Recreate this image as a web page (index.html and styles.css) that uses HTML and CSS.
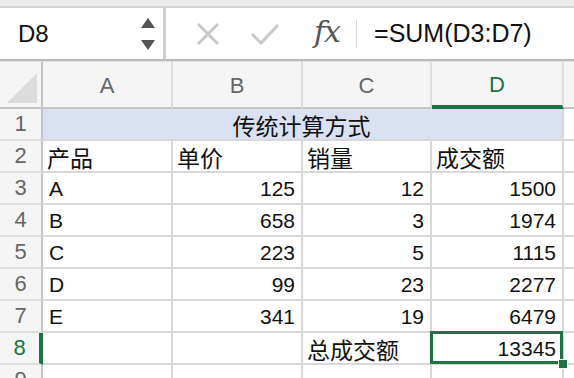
FILE: index.html
```html
<!DOCTYPE html>
<html lang="zh-CN">
<head>
    <meta charset="UTF-8">
    <title>传统计算方式</title>
    <link rel="stylesheet" href="styles.css">
</head>
<body>

    <div class="top-strip"></div>

    <div class="formula-bar">
        <div class="name-box">
            <span class="cell-ref">D8</span>
            <div class="spinner">
                <svg width="14" height="10" viewBox="0 0 14 10"><polygon points="7,0 14,10 0,10" fill="#555"/></svg>
                <svg width="14" height="10" viewBox="0 0 14 10"><polygon points="0,0 14,0 7,10" fill="#555"/></svg>
            </div>
        </div>
        <div class="bar-buttons">
            <svg class="btn-icon" width="24" height="24" viewBox="0 0 24 24">
                <path d="M2 2 L22 22 M22 2 L2 22" stroke="#c9c9c9" stroke-width="3" fill="none"/>
            </svg>
            <svg class="btn-icon" width="30" height="24" viewBox="0 0 30 24">
                <path d="M2 12 L11 21 L28 3" stroke="#c9c9c9" stroke-width="3" fill="none"/>
            </svg>
            <span class="fx">fx</span>
        </div>
        <div class="divider"></div>
        <div class="formula">=SUM(D3:D7)</div>
    </div>

    <div class="sheet">
        <div class="corner"><div class="corner-tri"></div></div>
        <div class="col-hdr">A</div>
        <div class="col-hdr">B</div>
        <div class="col-hdr">C</div>
        <div class="col-hdr active">D</div>
        <div class="col-hdr"></div>

        <div class="row-hdr">1</div>
        <div class="cell title cjk">传统计算方式</div>
        <div class="cell"></div>

        <div class="row-hdr">2</div>
        <div class="cell cjk">产品</div>
        <div class="cell cjk">单价</div>
        <div class="cell cjk">销量</div>
        <div class="cell cjk">成交额</div>
        <div class="cell"></div>

        <div class="row-hdr">3</div>
        <div class="cell">A</div>
        <div class="cell num">125</div>
        <div class="cell num">12</div>
        <div class="cell num">1500</div>
        <div class="cell"></div>

        <div class="row-hdr">4</div>
        <div class="cell">B</div>
        <div class="cell num">658</div>
        <div class="cell num">3</div>
        <div class="cell num">1974</div>
        <div class="cell"></div>

        <div class="row-hdr">5</div>
        <div class="cell">C</div>
        <div class="cell num">223</div>
        <div class="cell num">5</div>
        <div class="cell num">1115</div>
        <div class="cell"></div>

        <div class="row-hdr">6</div>
        <div class="cell">D</div>
        <div class="cell num">99</div>
        <div class="cell num">23</div>
        <div class="cell num">2277</div>
        <div class="cell"></div>

        <div class="row-hdr">7</div>
        <div class="cell">E</div>
        <div class="cell num">341</div>
        <div class="cell num">19</div>
        <div class="cell num">6479</div>
        <div class="cell"></div>

        <div class="row-hdr active">8</div>
        <div class="cell"></div>
        <div class="cell"></div>
        <div class="cell cjk">总成交额</div>
        <div class="cell num selected">13345<span class="handle"></span></div>
        <div class="cell"></div>

        <div class="row-hdr">9</div>
        <div class="cell"></div>
        <div class="cell"></div>
        <div class="cell"></div>
        <div class="cell"></div>
        <div class="cell"></div>
    </div>

</body>
</html>
```

FILE: styles.css
```css
body {
    margin: 0;
    padding: 0;
    width: 574px;
    height: 378px;
    overflow: hidden;
    font-family: "Liberation Sans", "Noto Sans CJK SC", sans-serif;
    background-color: #fff;
    color: #111;
}

.top-strip {
    height: 6px;
    background-color: #ececec;
    border-bottom: 2px solid #d6d6d6;
}

/* formula bar */
.formula-bar {
    display: flex;
    align-items: center;
    height: 51px;
    border-bottom: 2px solid #bcbcbc;
}

.name-box {
    display: flex;
    align-items: center;
    justify-content: space-between;
    width: 166px;
    height: 100%;
    box-sizing: border-box;
    padding: 0 8px 0 18px;
    border-right: 3px solid #cfcfcf;
}

.cell-ref {
    font-size: 24px;
}

.spinner {
    display: flex;
    flex-direction: column;
    gap: 12px;
}

.spinner svg {
    display: block;
}

.bar-buttons {
    display: flex;
    align-items: center;
    padding-left: 30px;
}

.btn-icon {
    display: block;
    margin-right: 30px;
}

.btn-icon:nth-child(2) {
    margin-right: 34px;
}

.fx {
    font-family: "DejaVu Serif", "Liberation Serif", serif;
    font-style: italic;
    font-size: 30px;
    color: #555;
    letter-spacing: -1px;
    margin-top: -4px;
}

.divider {
    width: 1px;
    height: 28px;
    background-color: #d8d8d8;
    margin: 0 17px 0 16px;
}

.formula {
    font-size: 25px;
    color: #111;
}

/* grid */
.sheet {
    display: grid;
    grid-template-columns: 43px 130px 130px 129px 132px 1fr;
    grid-template-rows: 47px repeat(9, 32px);
    border-top: 1px solid #e2e2e2;
}

.corner,
.col-hdr,
.row-hdr {
    background-color: #f5f5f5;
    color: #666;
    font-size: 22px;
    display: flex;
    align-items: center;
    justify-content: center;
    box-sizing: border-box;
}

.corner {
    position: relative;
    border-right: 2px solid #c4c4c4;
    border-bottom: 2px solid #c4c4c4;
}

.corner-tri {
    position: absolute;
    right: 4px;
    bottom: 4px;
    width: 0;
    height: 0;
    border-left: 30px solid transparent;
    border-bottom: 30px solid #dcdcdc;
}

.col-hdr {
    border-right: 2px solid #dedede;
    border-bottom: 2px solid #c4c4c4;
    padding-top: 2px;
}

.col-hdr.active {
    color: #1f7244;
    border-bottom: 4px solid #1f7244;
}

.row-hdr {
    border-right: 2px solid #c4c4c4;
    border-bottom: 2px solid #dedede;
}

.row-hdr.active {
    color: #1f7244;
    border-right: 4px solid #1f7244;
}

.cell {
    font-size: 21px;
    display: flex;
    align-items: center;
    padding: 2px 6px 0 6px;
    box-sizing: border-box;
    border-right: 2px solid #d8d8d8;
    border-bottom: 2px solid #d8d8d8;
    white-space: nowrap;
}

.cell.cjk {
    font-size: 23px;
    padding-left: 4px;
}

.cell.num {
    justify-content: flex-end;
}

.cell.title {
    grid-column: span 4;
    justify-content: center;
    background-color: #d9e1f2;
}

.cell.selected {
    position: relative;
}

.cell.selected::after {
    content: "";
    position: absolute;
    left: -2px;
    top: -2px;
    right: -1px;
    bottom: -1px;
    border: 3px solid #1f7244;
}

.handle {
    position: absolute;
    right: -6px;
    bottom: -6px;
    width: 8px;
    height: 8px;
    background-color: #1f7244;
    border: 1px solid #fff;
    z-index: 2;
}
```
